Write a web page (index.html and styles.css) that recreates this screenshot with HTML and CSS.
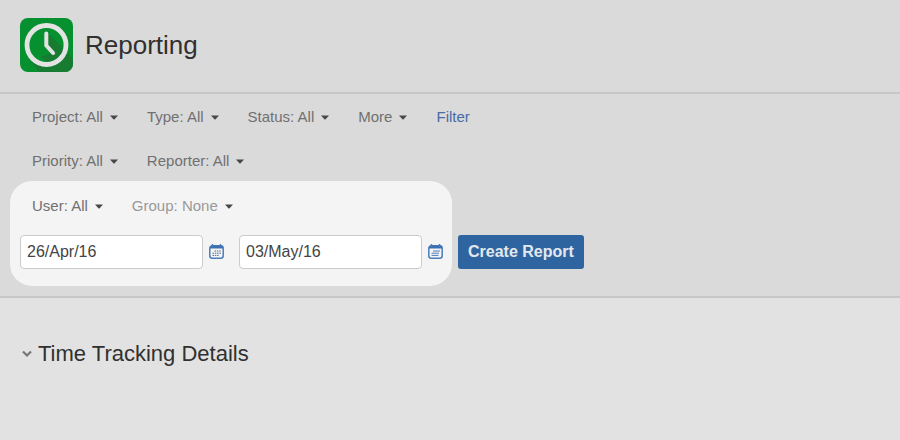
FILE: index.html
```html
<!DOCTYPE html>
<html lang="en">
<head>
<meta charset="utf-8">
<meta name="viewport" content="width=device-width, initial-scale=1">
<title>Reporting</title>
<link rel="stylesheet" href="styles.css">
</head>
<body>
<svg class="sprite" aria-hidden="true">
  <symbol id="caret" viewBox="0 0 8 5"><path d="M0 .5h8L4.6 4.2q-.6.6-1.2 0z" fill="#484848"/></symbol>
</svg>
<header class="header">
  <svg class="logo" viewBox="0 0 53 54" aria-hidden="true">
    <rect width="53" height="54" rx="8" fill="#06902f"/>
    <path d="M27 15L53 41v5a8 8 0 0 1-8 8H19L10 42l24-7-7-8z" fill="#187b32"/>
    <circle cx="26.500" cy="27" r="18" fill="#06902f"/>
    <path d="M28 15l16 16a18 18 0 0 1-17 13.500l-6-6L33 35l-6-8z" fill="#187b32"/>
    <circle cx="26.500" cy="27" r="19.500" fill="none" stroke="#e3e3e3" stroke-width="4.800"/>
    <path d="M26.300 15.500v12l6.800 7.500" fill="none" stroke="#e3e3e3" stroke-width="4" stroke-linecap="round" stroke-linejoin="round"/>
  </svg>
  <h1 class="title">Reporting</h1>
</header>
<form class="toolbar">
  <div class="filters">
    <button type="button" class="filter">Project: All <svg class="caret"><use href="#caret"/></svg></button>
    <button type="button" class="filter">Type: All <svg class="caret"><use href="#caret"/></svg></button>
    <button type="button" class="filter">Status: All <svg class="caret"><use href="#caret"/></svg></button>
    <button type="button" class="filter">More <svg class="caret"><use href="#caret"/></svg></button>
    <a class="link" href="#filter">Filter</a>
  </div>
  <div class="filters">
    <button type="button" class="filter">Priority: All <svg class="caret"><use href="#caret"/></svg></button>
    <button type="button" class="filter">Reporter: All <svg class="caret"><use href="#caret"/></svg></button>
  </div>
  <div class="actions">
    <div class="panel">
      <div class="filters panel-filters">
        <button type="button" class="filter">User: All <svg class="caret"><use href="#caret"/></svg></button>
        <button type="button" class="filter muted">Group: None <svg class="caret"><use href="#caret"/></svg></button>
      </div>
      <div class="dates">
        <div class="date">
          <input class="field" type="text" value="26/Apr/16" aria-label="Start date">
          <button type="button" class="pick" aria-label="Pick start date">
            <svg class="calendar" viewBox="0 0 16 16"><rect x=".8" y="1.800" width="13.400" height="12.400" rx="2.500" fill="#f4f4f4" stroke="#4b7dbb" stroke-width="1.500"/><path d="M1 4.500V4q0-2.500 2.500-2.500h8Q14 1.500 14 4v.5z" fill="#3a70b2"/><path d="M3.500 0v2.500M11.500 0v2.500" stroke="#4b7dbb" stroke-width="1.500"/><path d="M5.500 7h6.500M3.500 9.200h8.500M3.500 11.400h6.500" stroke="#4d6794" stroke-dasharray="1.500 .8"/></svg>
          </button>
        </div>
        <div class="date">
          <input class="field" type="text" value="03/May/16" aria-label="End date">
          <button type="button" class="pick" aria-label="Pick end date">
            <svg class="calendar" viewBox="0 0 16 16"><rect x=".8" y="1.800" width="13.400" height="12.400" rx="2.500" fill="#f4f4f4" stroke="#4b7dbb" stroke-width="1.500"/><path d="M1 4.500V4q0-2.500 2.500-2.500h8Q14 1.500 14 4v.5z" fill="#3a70b2"/><path d="M3.500 0v2.500M11.500 0v2.500" stroke="#4b7dbb" stroke-width="1.500"/><path d="M5 7h7M3.500 9.200h7.500M3.500 11.400h7" stroke="#4b7dbb"/></svg>
          </button>
        </div>
      </div>
    </div>
    <button type="submit" class="create">Create Report</button>
  </div>
</form>
<main class="details">
  <h2 class="section">
    <svg class="chevron" viewBox="0 0 12 8" aria-hidden="true"><path d="M2 1.500l4 4 4-4" fill="none" stroke="#777" stroke-width="2.200"/></svg>
    Time Tracking Details
  </h2>
</main>
</body>
</html>
```

FILE: styles.css
```css
* {
  box-sizing: border-box;
}

body {
  margin: 0;
  background: #e2e2e2;
  color: #303030;
  font: 15px/22px "Liberation Sans", Arial, sans-serif;
}

button,
input {
  margin: 0;
  font: inherit;
}

.sprite {
  position: absolute;
  width: 0;
  height: 0;
}

.header {
  display: flex;
  align-items: center;
  gap: 12px;
  padding: 18px 20px 20px;
  background: #dadada;
  border-bottom: 2px solid #c7c7c7;
}

.logo {
  width: 53px;
  height: 54px;
}

.title {
  margin: 0;
  font-size: 26px;
  font-weight: 400;
  line-height: 32px;
}

.toolbar {
  padding: 12px 10px 10px;
  background: #dadada;
  border-bottom: 2px solid #c7c7c7;
}

.filters {
  display: flex;
  flex-wrap: wrap;
  gap: 29px;
  margin-bottom: 22px;
  padding-left: 22px;
}

.filter {
  display: flex;
  align-items: center;
  gap: 7px;
  padding: 0;
  border: 0;
  background: none;
  color: #707070;
}

.muted {
  color: #999;
}

.caret {
  width: 8px;
  height: 5px;
}

.link {
  color: #4a6aa5;
  text-decoration: none;
}

.actions {
  display: flex;
  align-items: flex-end;
  gap: 6px;
  margin-top: -13px;
}

.panel {
  padding: 14px 8px 17px 10px;
  border-radius: 22px;
  background: #f4f4f4;
}

.panel-filters {
  margin-bottom: 18px;
  padding-left: 12px;
}

.dates {
  display: flex;
  gap: 14px;
}

.date {
  display: flex;
  align-items: center;
  gap: 6px;
}

.field {
  width: 183px;
  height: 34px;
  padding: 0 6px;
  border: 1px solid #ccc;
  border-radius: 4px;
  background: #fff;
  color: #444;
  font-size: 16px;
}

.pick {
  display: flex;
  padding: 0;
  border: 0;
  background: none;
}

.calendar {
  width: 16px;
  height: 16px;
}

.create {
  height: 34px;
  margin-bottom: 17px;
  padding: 0 10px;
  border: 0;
  border-radius: 3px;
  background: #2e65a0;
  color: #e4e8ee;
  font-weight: 700;
  font-size: 16px;
}

.details {
  padding: 40px 21px;
}

.section {
  display: flex;
  align-items: center;
  gap: 5px;
  margin: 0;
  font-size: 22px;
  font-weight: 400;
  line-height: 32px;
}

.chevron {
  width: 12px;
  height: 8px;
}
```
